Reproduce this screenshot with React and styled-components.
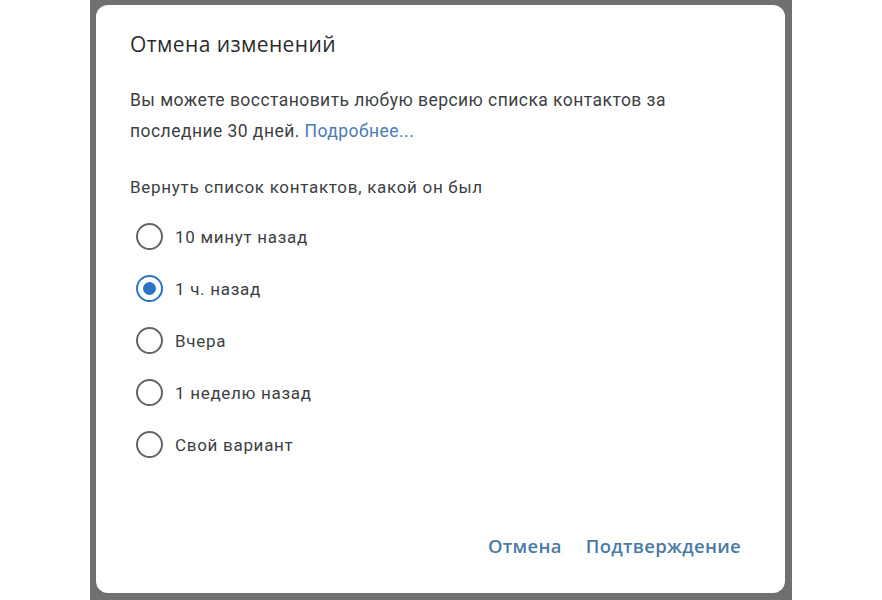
import { useState } from 'react'
import styled, { createGlobalStyle } from 'styled-components'

const GlobalStyle = createGlobalStyle`
    html, body {
        margin: 0;
        padding: 0;
        background: #ffffff;
    }
`

const Page = styled.div`
    width: 882px;
    height: 600px;
    display: flex;
    justify-content: center;
`

const Backdrop = styled.div`
    width: 702px;
    height: 600px;
    background: #707070;
    padding: 5px 7px 7px 6px;
    box-sizing: border-box;
`

const Dialog = styled.div`
    height: 100%;
    background: #ffffff;
    border-radius: 12px;
    padding: 27px 44px 30px 34px;
    box-sizing: border-box;
    display: flex;
    flex-direction: column;
    font-family: Roboto, "Noto Sans", sans-serif;
    color: #3c3f42;
`

const Title = styled.h2`
    margin: 0;
    font-family: "Open Sans", "Noto Sans", sans-serif;
    font-weight: 500;
    font-size: 21px;
    line-height: 24px;
    letter-spacing: 0.4px;
    color: #2b2c2e;
`

const Text = styled.p`
    margin: ${props => props.top || 0}px 0 0;
    font-size: ${props => props.big ? '17.5px' : '17px'};
    line-height: 31px;
    letter-spacing: ${props => props.big ? '0.45px' : '0.7px'};
`

const Link = styled.a`
    color: #4a7db0;
    text-decoration: none;
`

const Options = styled.div`
    margin-top: 8px;
    display: flex;
    flex-direction: column;
`

const Option = styled.label`
    height: 52px;
    display: flex;
    align-items: center;
    gap: 12px;
    padding-left: 6px;
    font-size: 17px;
    letter-spacing: 0.7px;
    cursor: pointer;
`

const Radio = styled.span`
    width: 27px;
    height: 27px;
    border-radius: 50%;
    border: 2.5px solid ${props => props.checked ? '#2a73c9' : '#646464'};
    box-sizing: border-box;
    display: flex;
    align-items: center;
    justify-content: center;

    &::after {
        content: '';
        width: 13px;
        height: 13px;
        border-radius: 50%;
        background: #2a73c9;
        display: ${props => props.checked ? 'block' : 'none'};
    }
`

const Actions = styled.div`
    margin-top: auto;
    display: flex;
    justify-content: flex-end;
    gap: 24px;
`

const Button = styled.button`
    border: none;
    background: none;
    padding: 0;
    height: 36px;
    font-family: "Open Sans", "Noto Sans", sans-serif;
    font-weight: 600;
    font-size: 18.5px;
    letter-spacing: 0.3px;
    color: #4a7aa3;
    cursor: pointer;
`

const options = ['10 минут назад', '1 ч. назад', 'Вчера', '1 неделю назад', 'Свой вариант']

const App = () => {
    const [selected, setSelected] = useState(1)

    return (
        <>
            <GlobalStyle />
            <Page>
                <Backdrop>
                    <Dialog>
                        <Title>Отмена изменений</Title>
                        <Text top={28.5} big>
                            Вы можете восстановить любую версию списка контактов за последние 30 дней. <Link href='#'>Подробнее...</Link>
                        </Text>
                        <Text top={25}>Вернуть список контактов, какой он был</Text>
                        <Options>
                            {options.map((item, index) => (
                                <Option key={item} onClick={() => setSelected(index)}>
                                    <Radio checked={selected === index} />
                                    {item}
                                </Option>
                            ))}
                        </Options>
                        <Actions>
                            <Button>Отмена</Button>
                            <Button>Подтверждение</Button>
                        </Actions>
                    </Dialog>
                </Backdrop>
            </Page>
        </>
    )
}

export default App
